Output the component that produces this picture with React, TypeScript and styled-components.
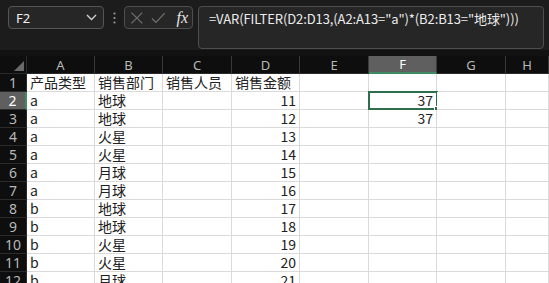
import React from "react";
import styled, { createGlobalStyle } from "styled-components";

const Global = createGlobalStyle`
  html, body { margin: 0; padding: 0; background: #0e0e0e; overflow: hidden; }
  body { font-family: "Noto Sans CJK SC", "Noto Sans", sans-serif; }
  * { box-sizing: border-box; }
`;

const Page = styled.div`
  width: 549px;
  height: 283px;
  overflow: hidden;
  background: #0e0e0e;
  display: flex;
  flex-direction: column;
`;

const FormulaBar = styled.div`
  height: 56px;
  flex: none;
  background: #1c1c1c;
  display: flex;
  align-items: flex-start;
  padding: 6px 0 0 8px;
  gap: 0;
  border-bottom: 6px solid #121212;
`;

const NameBox = styled.div`
  width: 96px;
  height: 23px;
  border: 1px solid #555;
  border-radius: 4px;
  background: #262626;
  display: flex;
  align-items: center;
  justify-content: space-between;
  padding: 0 6px 0 7px;
  color: #f0f0f0;
  font-family: "Noto Sans", sans-serif;
  font-size: 13px;
`;

const Dots = styled.div`
  width: 20px;
  height: 23px;
  display: flex;
  align-items: center;
  justify-content: center;
`;

const FxBox = styled.div`
  width: 69px;
  height: 23px;
  border: 1px solid #4e4e4e;
  border-radius: 4px;
  background: #262626;
  display: flex;
  align-items: center;
  padding: 0 4px 0 5px;
  gap: 7px;
`;

const Fx = styled.span`
  font-family: "Liberation Serif", serif;
  font-style: italic;
  font-size: 16px;
  color: #e6e6e6;
  margin-left: 4px;
  line-height: 1;
`;

const FormulaInput = styled.div`
  margin-left: 5px;
  width: 346px;
  height: 43px;
  border: 1px solid #4e4e4e;
  border-radius: 4px;
  background: #262626;
  color: #ececec;
  font-size: 13px;
  padding: 2px 0 0 10px;
  line-height: 20px;
  white-space: nowrap;
  letter-spacing: -0.1px;
`;

const Sheet = styled.div`
  display: grid;
  grid-template-columns: 27px 68px 68px 69px 68px 69px 68px 69px 1fr;
  grid-auto-rows: 18px;
  background: #fff;
`;

const Corner = styled.div`
  background: #0e0e0e;
  position: relative;
  border-right: 1px solid #2a2a2a;
  border-bottom: 1px solid #2a2a2a;
`;

const Triangle = styled.div`
  position: absolute;
  right: 2px;
  bottom: 2px;
  width: 0;
  height: 0;
  border-left: 10px solid transparent;
  border-bottom: 10px solid #6a6a6a;
`;

const ColHead = styled.div<{ $sel?: boolean }>`
  background: ${(p) => (p.$sel ? "#5f5f5f" : "#0e0e0e")};
  color: ${(p) => (p.$sel ? "#ffffff" : "#b8b8b8")};
  border-right: 1px solid #3a3a3a;
  border-bottom: ${(p) => (p.$sel ? "2px solid #3f8a62" : "1px solid #2a2a2a")};
  font-family: "Noto Sans", sans-serif;
  font-size: 13px;
  display: flex;
  align-items: center;
  justify-content: center;
  line-height: 1;
  padding-top: 1px;
`;

const RowHead = styled.div<{ $sel?: boolean }>`
  background: ${(p) => (p.$sel ? "#5f5f5f" : "#0e0e0e")};
  color: ${(p) => (p.$sel ? "#ffffff" : "#b8b8b8")};
  border-bottom: 1px solid #2a2a2a;
  border-right: ${(p) => (p.$sel ? "2px solid #3f8a62" : "1px solid #2a2a2a")};
  font-family: "Noto Sans", sans-serif;
  font-size: 14px;
  display: flex;
  align-items: center;
  justify-content: center;
  line-height: 1;
`;

const Cell = styled.div<{ $num?: boolean }>`
  position: relative;
  background: #fff;
  color: #222;
  border-right: 1px solid #dadada;
  border-bottom: 1px solid #dadada;
  font-size: 14px;
  line-height: 17px;
  padding: 0 3px 0 3px;
  display: flex;
  align-items: center;
  justify-content: ${(p) => (p.$num ? "flex-end" : "flex-start")};
  white-space: nowrap;
  overflow: visible;
  font-family: "Noto Sans CJK SC", "Noto Sans", sans-serif;
`;

const Selection = styled.div`
  position: absolute;
  left: -1px;
  top: -1px;
  right: -2px;
  bottom: -1px;
  border: 2px solid #2f6e4d;
  pointer-events: none;
`;

const Handle = styled.div`
  position: absolute;
  right: -4px;
  bottom: -4px;
  width: 6px;
  height: 6px;
  background: #2f6e4d;
  border: 1px solid #fff;
`;

const cols = ["A", "B", "C", "D", "E", "F", "G", "H"];

const data: string[][] = [
  ["产品类型", "销售部门", "销售人员", "销售金额", "", "", "", ""],
  ["a", "地球", "", "11", "", "37", "", ""],
  ["a", "地球", "", "12", "", "37", "", ""],
  ["a", "火星", "", "13", "", "", "", ""],
  ["a", "火星", "", "14", "", "", "", ""],
  ["a", "月球", "", "15", "", "", "", ""],
  ["a", "月球", "", "16", "", "", "", ""],
  ["b", "地球", "", "17", "", "", "", ""],
  ["b", "地球", "", "18", "", "", "", ""],
  ["b", "火星", "", "19", "", "", "", ""],
  ["b", "火星", "", "20", "", "", "", ""],
  ["b", "月球", "", "21", "", "", "", ""],
];

const isNum = (s: string) => /^\d+$/.test(s);

export default function App() {
  return (
    <Page>
      <Global />
      <FormulaBar>
        <NameBox>
          <span>F2</span>
          <svg width="11" height="7" viewBox="0 0 11 7">
            <path d="M1 1l4.5 4.5L10 1" stroke="#d0d0d0" strokeWidth="1.4" fill="none" />
          </svg>
        </NameBox>
        <Dots>
          <svg width="3" height="12" viewBox="0 0 3 12">
            <circle cx="1.5" cy="1.5" r="1.1" fill="#9a9a9a" />
            <circle cx="1.5" cy="6" r="1.1" fill="#9a9a9a" />
            <circle cx="1.5" cy="10.5" r="1.1" fill="#9a9a9a" />
          </svg>
        </Dots>
        <FxBox>
          <svg width="14" height="14" viewBox="0 0 14 14">
            <path d="M1.5 1.5l11 11M12.5 1.5l-11 11" stroke="#707070" strokeWidth="1.3" fill="none" />
          </svg>
          <svg width="15" height="12" viewBox="0 0 15 12">
            <path d="M1 6.5l4 4L14 1" stroke="#707070" strokeWidth="1.3" fill="none" />
          </svg>
          <Fx>fx</Fx>
        </FxBox>
        <FormulaInput>=VAR(FILTER(D2:D13,(A2:A13="a")*(B2:B13="地球")))</FormulaInput>
      </FormulaBar>
      <Sheet>
        <Corner>
          <Triangle />
        </Corner>
        {cols.map((c) => (
          <ColHead key={c} $sel={c === "F"}>
            {c}
          </ColHead>
        ))}
        {data.map((row, ri) => (
          <React.Fragment key={ri}>
            <RowHead $sel={ri === 1}>{ri + 1}</RowHead>
            {row.map((v, ci) => (
              <Cell key={ci} $num={isNum(v)}>
                {v}
                {ri === 1 && ci === 5 && (
                  <Selection>
                    <Handle />
                  </Selection>
                )}
              </Cell>
            ))}
          </React.Fragment>
        ))}
      </Sheet>
    </Page>
  );
}
